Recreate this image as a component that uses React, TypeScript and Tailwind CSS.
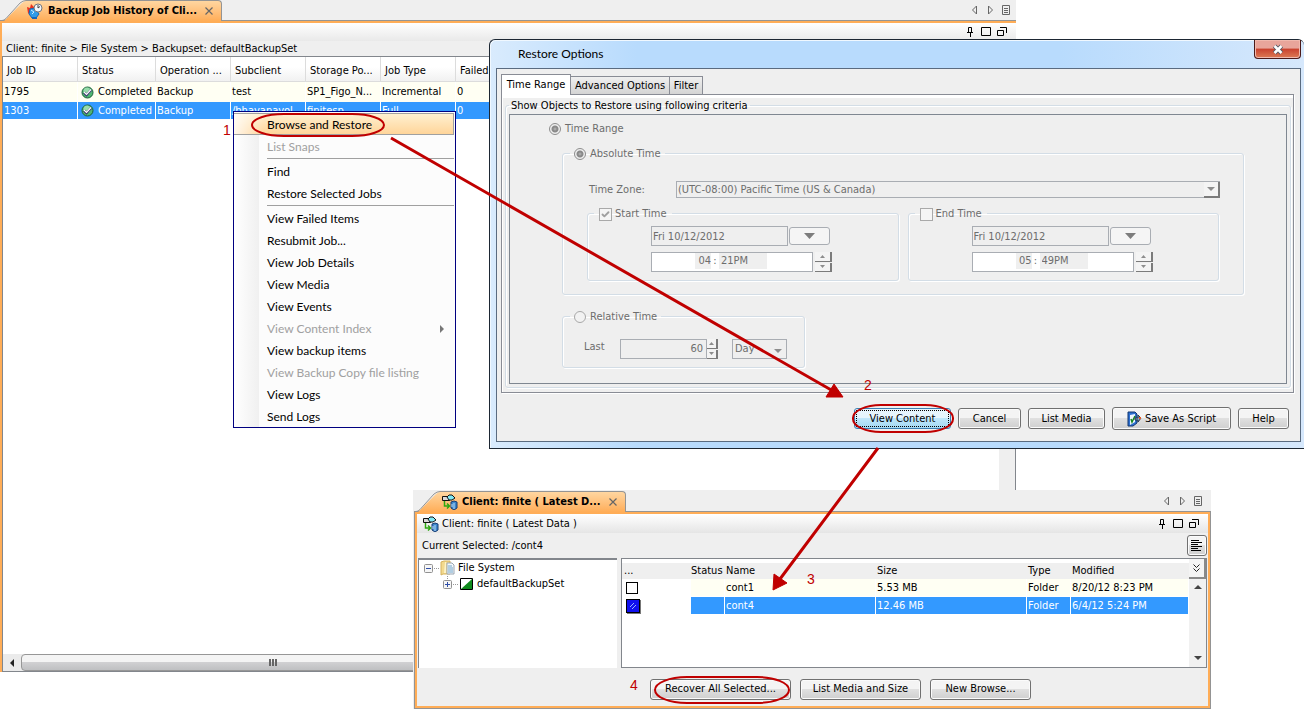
import clsx from "clsx";
import { Check } from "lucide-react";
import type { ReactNode } from "react";

const MENU: { label: string; disabled?: boolean; sub?: boolean; sep?: boolean }[] = [
	{ label: "Browse and Restore" },
	{ label: "List Snaps", disabled: true, sep: true },
	{ label: "Find" },
	{ label: "Restore Selected Jobs", sep: true },
	{ label: "View Failed Items" },
	{ label: "Resubmit Job..." },
	{ label: "View Job Details" },
	{ label: "View Media" },
	{ label: "View Events" },
	{ label: "View Content Index", disabled: true, sub: true },
	{ label: "View backup items" },
	{ label: "View Backup Copy file listing", disabled: true },
	{ label: "View Logs" },
	{ label: "Send Logs" },
];

const JOB_COLUMNS = [
	"Job ID",
	"Status",
	"Operation ...",
	"Subclient",
	"Storage Po...",
	"Job Type",
	"Failed",
];

const JOBS = [
	["1795", "Completed", "Backup", "test", "SP1_Figo_N...", "Incremental", "0"],
	["1303", "Completed", "Backup", "/bhavanavol", "finitesp", "Full", "0"],
];

const FILES = [
	{ name: "cont1", size: "5.53 MB", type: "Folder", modified: "8/20/12 8:23 PM" },
	{ name: "cont4", size: "12.46 MB", type: "Folder", modified: "6/4/12 5:24 PM" },
];

const iconButton = "flex h-3 w-3 items-center justify-center";

function HistoryIcon() {
	return (
		<svg width="18" height="16" viewBox="0 0 18 16" aria-hidden="true">
			<path d="M1 4l3 1 1-4 3 3 1 5-4 4-3-3z" fill="#e8321f" />
			<path d="M4 6l5-1 4 6-3 4H6L3 11z" fill="#2f9be8" stroke="#1566b8" />
			<path d="M6 14h5v2H6z" fill="#1566b8" />
			<circle cx="12" cy="5" r="4" fill="#f2f6fb" stroke="#74767c" />
			<path d="M12 5V2M12 5l2-1.500" stroke="#444" fill="none" />
			<path d="M5 7l3 2-2 2" stroke="#c9ecff" fill="none" />
		</svg>
	);
}

function BrowseIcon() {
	return (
		<svg width="16" height="16" viewBox="0 0 16 16" aria-hidden="true">
			<path d="M.5 2.500h7v4h-7z" fill="#d9d9d9" stroke="#111" />
			<path d="M5 3l2-2h3l3 3-3 2H7z" fill="#7fe9f5" stroke="#111" />
			<path d="M2.500 7v5H7M5 9.500L7.500 12 5 14.500" stroke="#2da810" strokeWidth="1.500" fill="none" />
			<path d="M9 8l3-1 3 1v6l-3 2-3-2z" fill="#3d86cc" stroke="#173d73" />
			<path d="M12 9v6M10 10v3" stroke="#b9dcf7" />
		</svg>
	);
}

function ScriptIcon() {
	return (
		<svg width="15" height="16" viewBox="0 0 15 16" aria-hidden="true">
			<path d="M1 1h7l2 2v9l-4 3H1z" fill="#2d6fd0" stroke="#12366f" />
			<path d="M3 4l5-1v8l-5 3z" fill="#eef6ff" />
			<path d="M4 8l1 3 3-6" stroke="#17851f" strokeWidth="1.500" fill="none" />
			<path d="M8 7h3V4l3 3-3 4V9H8z" fill="#8ba6c6" stroke="#26384f" />
			<path d="M12 7h2" stroke="#e25a28" strokeWidth="2" />
		</svg>
	);
}

function CompletedIcon() {
	return (
		<svg width="13" height="13" viewBox="0 0 13 13" className="shrink-0" aria-hidden="true">
			<circle cx="6.500" cy="6.500" r="5.500" fill="#4fb673" stroke="#1c5f3a" />
			<circle cx="6" cy="5" r="3.500" fill="#97dcaa" />
			<path d="M3 6.500l2.500 2.500L10 4" stroke="#3b3470" strokeWidth="2.500" fill="none" />
			<path d="M3 6l2.500 2.500L10 3.500" stroke="#fff" strokeWidth="1.200" fill="none" />
		</svg>
	);
}

function FolderIcon() {
	return (
		<svg width="16" height="16" viewBox="0 0 16 16" aria-hidden="true">
			<path d="M1 2l3-1h6v13H3l-2 1z" fill="#f2d98e" stroke="#d5b25c" />
			<path d="M5 2h1v11H4z" fill="#fdf3c8" />
			<path d="M7 3h5l2 2v9H7z" fill="#f4f8fc" stroke="#9aa5b1" />
			<path d="M8 6h4M8 8h5M8 10h5M8 12h5" stroke="#6fa3c8" />
		</svg>
	);
}

function Arrow({ dir, className }: { dir: "up" | "down" | "left" | "right"; className?: string }) {
	const points = {
		up: "0,5 4,1 8,5",
		down: "0,2 4,6 8,2",
		left: "6,0 2,4 6,8",
		right: "2,0 6,4 2,8",
	}[dir];
	return (
		<svg width="8" height="8" viewBox="0 0 8 8" className={className} aria-hidden="true">
			<polygon points={points} fill="currentColor" />
		</svg>
	);
}

function StripControls() {
	return (
		<div className="flex items-center gap-1 text-[#666]">
			<button type="button" aria-label="Previous tab" className={iconButton}>
				<svg width="7" height="10" viewBox="0 0 7 10">
					<path d="M5.500 1v8L1.500 5z" fill="none" stroke="currentColor" />
				</svg>
			</button>
			<button type="button" aria-label="Next tab" className={iconButton}>
				<svg width="7" height="10" viewBox="0 0 7 10">
					<path d="M1.500 1v8l4-4z" fill="none" stroke="currentColor" />
				</svg>
			</button>
			<button type="button" aria-label="List tabs" className={iconButton}>
				<svg width="8" height="10" viewBox="0 0 8 10">
					<path d="M.5.5h7v9h-7zM2 3.500h4M2 5.500h4M2 7.500h4" fill="none" stroke="currentColor" />
				</svg>
			</button>
		</div>
	);
}

function WindowControls() {
	return (
		<div className="flex items-center gap-1">
			<button type="button" aria-label="Pin" className={iconButton}>
				<svg width="8" height="10" viewBox="0 0 8 10">
					<path d="M2.500 5V.5h3V5M1 5.500h6M4.500 6v4" fill="none" stroke="#000" />
				</svg>
			</button>
			<button type="button" aria-label="Maximize" className={iconButton}>
				<svg width="10" height="10" viewBox="0 0 10 10">
					<path d="M.5.5h9v8h-9z" fill="none" stroke="#000" />
				</svg>
			</button>
			<button type="button" aria-label="Float" className={iconButton}>
				<svg width="10" height="10" viewBox="0 0 10 10">
					<path d="M.5 3.500h6v5h-6zM3 .5h6.500V6" fill="none" stroke="#000" />
				</svg>
			</button>
		</div>
	);
}

function WindowTab({ icon, title }: { icon: ReactNode; title: string }) {
	return (
		<div className="flex self-stretch">
			<svg width="26" height="21" viewBox="0 0 26 21" aria-hidden="true">
				<defs>
					<linearGradient id="tabFill" x1="0" y1="0" x2="0" y2="1">
						<stop offset="0" stopColor="#ffd6a0" />
						<stop offset="1" stopColor="#ffad57" />
					</linearGradient>
				</defs>
				<path d="M0 21h4L22 3q2-2 4-2v20z" fill="url(#tabFill)" />
				<path d="M0 20.500h2q2 0 4-2L20 3Q23 .5 26 .5" fill="none" stroke="#949494" />
			</svg>
			<div className="flex items-center rounded-tr-sm border-t border-r border-[#949494] bg-gradient-to-b from-[#ffd6a0] to-[#ffad57] pr-[6px]">
				<span className="flex w-[18px] justify-end">{icon}</span>
				<span className="ml-1 font-bold whitespace-nowrap">{title}</span>
				<button type="button" aria-label="Close tab" className="ml-[6px] flex h-3 w-3 items-center justify-center">
					<svg width="8" height="8" viewBox="0 0 8 8">
						<path d="M.5.5l7 7M7.500.5l-7 7" stroke="#666" strokeWidth="1.200" />
					</svg>
				</button>
			</div>
		</div>
	);
}

function JobHistory() {
	return (
		<section className="absolute top-0 right-[288px] bottom-[37px] left-0 flex flex-col bg-[#efefef]">
			<div className="flex h-[21px] items-center justify-between border-b border-[#949494] pr-1">
				<div className="-mb-px flex h-[21px]">
					<WindowTab icon={<HistoryIcon />} title="Backup Job History of Cli..." />
				</div>
				<StripControls />
			</div>
			<div className="flex flex-1 flex-col border-t-2 border-l-2 border-[#ffad57]">
				<div className="flex h-[18px] items-center justify-end bg-gradient-to-b from-white to-[#e9e9e9] pr-2">
					<WindowControls />
				</div>
				<div className="flex h-[15px] items-center pl-1">
					Client: finite &gt; File System &gt; Backupset: defaultBackupSet
				</div>
				<div className="flex flex-1 flex-col border border-[#82868c]">
					<div className="flex flex-1 bg-white">
						<div className="flex-1">
							<table className="w-full table-fixed border-separate border-spacing-0">
								<colgroup>
									<col className="w-[75px]" />
									<col className="w-[78px]" />
									<col className="w-[75px]" />
									<col className="w-[75px]" />
									<col className="w-[75px]" />
									<col className="w-[75px]" />
									<col />
								</colgroup>
								<thead>
									<tr className="h-[25px] bg-gradient-to-b from-white from-40% to-[#f0f0f0]">
										{JOB_COLUMNS.map((c) => (
											<th
												key={c}
												className="border-r border-b border-[#dcdcdc] p-0 pt-[3px] pl-1 text-left font-normal whitespace-nowrap"
											>
												{c}
											</th>
										))}
									</tr>
								</thead>
								<tbody>
									{JOBS.map((job, row) => (
										<tr
											key={job[0]}
											className={row === 1 ? "h-[17px] bg-[#3399ff] text-white" : "h-[20px] bg-[#fffff3]"}
										>
											{job.map((cell, i) => (
												<td
													key={JOB_COLUMNS[i]}
													className="border-r border-white p-0 pl-px leading-4 whitespace-nowrap"
												>
													{i === 1 ? (
														<span className="flex items-center gap-1 pl-[2px]">
															<CompletedIcon />
															{cell}
														</span>
													) : (
														cell
													)}
												</td>
											))}
										</tr>
									))}
								</tbody>
							</table>
						</div>
						<div className="w-[16px] bg-[#efefef]" />
					</div>
					<div className="flex h-[17px] items-stretch bg-[#ebebeb]">
						<button type="button" aria-label="Scroll left" className="flex w-[18px] items-center justify-center text-[#222]">
							<Arrow dir="left" />
						</button>
						<div className="flex w-[504px] items-center justify-center gap-px rounded-sm border border-[#979797] bg-gradient-to-b from-[#f4f4f4] from-45% via-[#d0d0d2] via-50% to-[#bfc0c2]">
							<span className="h-[7px] w-[2px] bg-[#666]" />
							<span className="h-[7px] w-[2px] bg-[#666]" />
							<span className="h-[7px] w-[2px] bg-[#666]" />
						</div>
					</div>
				</div>
			</div>
		</section>
	);
}

function ContextMenu() {
	return (
		<div
			role="menu"
			className="absolute top-[111px] left-[233px] w-[223px] border border-[#000080] bg-[#fcfcfc] bg-[linear-gradient(to_right,white,#f0f0f0_25px,#fcfcfc_25px)] pt-px pr-px font-[Lato,'Open_Sans',sans-serif] text-xs"
		>
			{MENU.map((item, i) => (
				<div key={item.label}>
					<button
						type="button"
						role="menuitem"
						disabled={item.disabled}
						className={clsx(
							"flex h-[22px] w-full items-center justify-between pt-px pr-2 pl-[33px] text-left whitespace-nowrap",
							i === 0 &&
								"border border-l-0 border-[#a0a0a0] bg-[linear-gradient(to_right,#ffffffcc,transparent_30px),linear-gradient(#fff0d0,#ffd59a)]",
							item.disabled && "text-[#a0a0a0]",
						)}
					>
						{item.label}
						{item.sub && <Arrow dir="right" className="text-[#777]" />}
					</button>
					{item.sep && <hr className="mt-px mb-px ml-[33px] border-[#a0a0a0]" />}
				</div>
			))}
		</div>
	);
}

const groupBox = "min-w-0 rounded-[3px] border border-[#d3dde6] shadow-[inset_1px_1px_0_#fff,1px_1px_0_#fff]";
const field = "border border-[#a9adb3] px-px text-[#6d6d6d]";
const radio =
	"h-3 w-3 shrink-0 appearance-none rounded-full border border-[#a8a8a8] bg-[#f2f2f2] checked:border-[#8d8d8d] checked:bg-[radial-gradient(circle,#bbb_0,#8a8a8a_2px,#8a8a8a_3px,#efefef_4px)]";
const pushButton =
	"flex h-[21px] items-center justify-center rounded-[3px] border border-[#707070] bg-gradient-to-b from-[#f4f4f4] from-45% via-[#e0e0e0] via-50% to-[#cfcfcf] whitespace-nowrap shadow-[inset_0_0_0_1px_#fbfbfb]";

function Spinner({ label, className }: { label: string; className: string }) {
	const half =
		"flex flex-1 items-center justify-center border-r-2 border-b border-[#7b7b7b] bg-[#f4f4f4] text-[#8d8d8d]";
	return (
		<div className={clsx("flex flex-col gap-px", className)}>
			<button type="button" disabled aria-label={`Increase ${label}`} className={half}>
				<svg width="5" height="3" viewBox="0 0 5 3">
					<polygon points="0,3 2.500,0 5,3" fill="currentColor" />
				</svg>
			</button>
			<button type="button" disabled aria-label={`Decrease ${label}`} className={half}>
				<svg width="5" height="3" viewBox="0 0 5 3">
					<polygon points="0,0 2.500,3 5,0" fill="currentColor" />
				</svg>
			</button>
		</div>
	);
}

interface TimeGroupProps {
	label: string;
	hour: string;
	minute: string;
	checked?: boolean;
}

function TimeGroup({ label, hour, minute, checked }: TimeGroupProps) {
	return (
		<fieldset className={clsx(groupBox, "flex-1")}>
			<legend className="ml-[6px] h-4 px-[5px]">
				<label className="flex h-[18px] items-center gap-[3px]">
					<span className="relative flex">
						<input
							type="checkbox"
							disabled
							defaultChecked={checked}
							className="h-[13px] w-[13px] appearance-none border border-[#a9a9a9] bg-[#f5f5f5]"
						/>
						{checked && <Check className="absolute top-0.5 left-0.5 h-[9px] w-[9px] text-[#a0a0a0]" strokeWidth={5} />}
					</span>
					{label}
				</label>
			</legend>
			<div className="flex flex-col gap-[6px] pt-[5px] pb-2 pl-[63px]">
				<div className="flex gap-px">
					<input
						type="text"
						disabled
						defaultValue="Fri 10/12/2012"
						aria-label={`${label} date`}
						className={clsx(field, "h-5 w-[137px]")}
					/>
					<button
						type="button"
						disabled
						aria-label={`Pick ${label} date`}
						className="my-px flex w-[41px] items-center justify-center rounded-[3px] border border-[#a9adb3] bg-[#f5f5f5] text-[#7d7d7d]"
					>
						<svg width="11" height="6" viewBox="0 0 11 6">
							<polygon points="0,0 11,0 5.500,6" fill="currentColor" />
						</svg>
					</button>
				</div>
				<div className="flex gap-[2px]">
					<div className={clsx(field, "flex h-5 w-[162px] items-start bg-white pl-[43px]")}>
						<input
							type="text"
							disabled
							defaultValue={hour}
							aria-label={`${label} hour`}
							className="h-4 w-4 bg-[#efefef] text-right"
						/>
						<span className="w-[8px] text-center leading-4">:</span>
						<input
							type="text"
							disabled
							defaultValue={`${minute}PM`}
							aria-label={`${label} minute`}
							className="h-4 w-[48px] bg-[#efefef] pl-[2px]"
						/>
					</div>
					<Spinner label={label} className="w-[17px]" />
				</div>
			</div>
		</fieldset>
	);
}

function RestoreOptions() {
	return (
		<section
			role="dialog"
			aria-labelledby="restore-title"
			className="absolute top-[39px] right-0 left-[489px] rounded-t-md border border-r-0 border-[#1d2733] bg-[#b8dbfd] bg-[linear-gradient(to_right,#d9ebfd_0,#b8dbfd_18%,#b8dbfd_70%,#d6e8fc_100%)] pr-[3px] pb-[6px] pl-[6px] shadow-[inset_1px_1px_0_#f0f8ff]"
		>
			<header className="flex h-[28px] items-start justify-between">
				<h1
					id="restore-title"
					className="mt-[5px] ml-[22px] font-[Lato,'Open_Sans',sans-serif] text-xs leading-[18px]"
				>
					Restore Options
				</h1>
				<button
					type="button"
					aria-label="Close"
					className="flex h-[19px] w-[47px] items-center justify-center rounded-b-[4px] border border-t-0 border-[#4b1a1a] bg-gradient-to-b from-[#e8a59b] from-45% via-[#c9412f] via-50% to-[#dc7a55] shadow-[inset_0_0_0_1px_#f0b9ae]"
				>
					<svg width="12" height="11" viewBox="0 0 12 11">
						<path d="M2.500 2l7 7M9.500 2l-7 7" stroke="#555a66" strokeWidth="4.500" />
						<path d="M2.500 2l7 7M9.500 2l-7 7" stroke="#fff" strokeWidth="2.500" />
					</svg>
				</button>
			</header>
			<div className="border border-[#5a6b80] bg-[#efefef] pt-[5px] pb-[11px]">
				<div role="tablist" className="relative -mb-px flex items-end pl-1">
					<button
						type="button"
						role="tab"
						aria-selected="true"
						className="flex h-[21px] w-[70px] items-center justify-center border border-b-0 border-[#898c95] bg-white"
					>
						Time Range
					</button>
					<button
						type="button"
						role="tab"
						aria-selected="false"
						className="flex h-[19px] w-[99px] items-center justify-center border border-l-0 border-[#898c95] bg-gradient-to-b from-[#f0f0f0] to-[#d4d4d4]"
					>
						Advanced Options
					</button>
					<button
						type="button"
						role="tab"
						aria-selected="false"
						className="flex h-[19px] w-[33px] items-center justify-center border border-l-0 border-[#898c95] bg-gradient-to-b from-[#f0f0f0] to-[#d4d4d4]"
					>
						Filter
					</button>
				</div>
				<div
					role="tabpanel"
					className="mr-[6px] ml-1 border border-[#898c95] pt-[2px] pr-[2px] pb-1 pl-[3px] shadow-[inset_0_3px_0_#fff,inset_1px_0_0_#fff,1px_1px_0_#fff]"
				>
					<fieldset className={clsx(groupBox, "pr-[3px] pb-[3px] pl-[3px]")}>
						<legend className="h-4 px-[2px] leading-[18px]">Show Objects to Restore using following criteria</legend>
						<div className="mt-px border border-[#7f8791] bg-[#efefef] pt-[6px] pb-[15px] text-[#6d6d6d]">
							<label className="ml-[39px] flex h-4 items-center gap-1">
								<input type="radio" name="mode" disabled defaultChecked className={radio} />
								Time Range
							</label>
							<fieldset className={clsx(groupBox, "mt-2 mr-[42px] ml-[52px] pb-[13px]")}>
								<legend className="ml-[7px] h-4 px-1">
									<label className="flex h-[18px] items-center gap-1">
										<input type="radio" name="range" disabled defaultChecked className={radio} />
										Absolute Time
									</label>
								</legend>
								<div className="mt-5 mr-[23px] ml-[26px] flex h-[17px] items-center">
									<label htmlFor="tz" className="w-[87px]">
										Time Zone:
									</label>
									<div className="relative flex-1">
										<select id="tz" disabled className={clsx(field, "block h-[17px] w-full appearance-none opacity-100")}>
											<option>(UTC-08:00) Pacific Time (US &amp; Canada)</option>
										</select>
										<span className="pointer-events-none absolute top-px right-0 flex h-[16px] w-[16px] items-center justify-center border-r-2 border-b-2 border-[#7b7b7b] bg-[#f4f4f4] text-[#8d8d8d]">
											<Arrow dir="down" />
										</span>
									</div>
								</div>
								<div className="mt-[7px] mr-[24px] ml-[24px] flex gap-[9px]">
									<TimeGroup label="Start Time" hour="04" minute="21" checked />
									<TimeGroup label="End Time" hour="05" minute="49" />
								</div>
							</fieldset>
							<fieldset className={clsx(groupBox, "mt-[13px] ml-[52px] w-[243px]")}>
								<legend className="ml-[7px] h-4 px-1">
									<label className="flex h-[18px] items-center gap-1">
										<input type="radio" name="range" disabled className={radio} />
										Relative Time
									</label>
								</legend>
								<div className="mt-[15px] mb-2 ml-[21px] flex h-5">
									<label htmlFor="last" className="w-[36px] leading-4">
										Last
									</label>
									<input
										id="last"
										type="text"
										disabled
										defaultValue="60"
										className={clsx(field, "w-[87px] pr-[3px] text-right")}
									/>
									<Spinner label="last" className="w-[11px]" />
									<div className="relative ml-[14px] w-[55px]">
										<select
											aria-label="Unit"
											disabled
											className={clsx(field, "h-5 w-full appearance-none pl-[2px] opacity-100")}
										>
											<option>Day</option>
										</select>
										<Arrow dir="down" className="pointer-events-none absolute top-2 right-[5px] text-[#8d8d8d]" />
									</div>
								</div>
							</fieldset>
						</div>
					</fieldset>
				</div>
				<div className="mt-[14px] mr-[11px] flex items-center justify-end gap-[7px]">
					<button
						type="button"
						className="flex h-[21px] w-[97px] items-center justify-center rounded-[3px] border border-[#3c7fb1] bg-gradient-to-b from-[#e6f5fd] from-45% via-[#bfe6fa] via-50% to-[#a3d8f3] p-px"
					>
						<span className="flex h-full w-full items-center justify-center border border-dotted border-black">
							View Content
						</span>
					</button>
					<button type="button" className={clsx(pushButton, "w-[63px]")}>
						Cancel
					</button>
					<button type="button" className={clsx(pushButton, "w-[77px]")}>
						List Media
					</button>
					<button type="button" className={clsx(pushButton, "h-[23px] w-[119px] gap-[3px]")}>
						<ScriptIcon />
						Save As Script
					</button>
					<button type="button" className={clsx(pushButton, "w-[51px]")}>
						Help
					</button>
				</div>
			</div>
		</section>
	);
}

function Expander({ open }: { open: boolean }) {
	return (
		<svg width="16" height="16" viewBox="0 0 16 16" aria-hidden="true">
			{!open && <path d="M4.500 0v4" stroke="#999" strokeDasharray="1 1" />}
			<rect x=".5" y="4.500" width="8" height="8" rx="1" fill="#f6f6f6" stroke="#919191" />
			<path d={open ? "M2 8.500h5" : "M2 8.500h5M4.500 6v5"} stroke="#2f4fa8" />
			<path d="M10 8.500h6" stroke="#999" strokeDasharray="1 1" />
		</svg>
	);
}

function BrowseWindow() {
	return (
		<section className="absolute top-[490px] right-[93px] bottom-0 left-[413px] flex flex-col bg-[#efefef] pl-px">
			<div className="flex h-[22px] items-end justify-between border-b border-[#949494] pr-[7px]">
				<div className="-mb-px flex h-[21px]">
					<WindowTab icon={<BrowseIcon />} title="Client: finite ( Latest D..." />
				</div>
				<div className="pb-1">
					<StripControls />
				</div>
			</div>
			<div className="flex flex-1 flex-col border-r border-b border-l border-[#949494]">
				<div className="flex flex-1 flex-col border-2 border-[#ffad57]">
					<div className="flex h-[19px] items-center justify-between bg-gradient-to-b from-white to-[#e5e5e5] pr-[8px] pl-[6px]">
						<span className="flex items-center gap-[3px]">
							<BrowseIcon />
							Client: finite ( Latest Data )
						</span>
						<WindowControls />
					</div>
					<div className="flex h-[25px] items-center justify-between pr-px pl-[5px]">
						Current Selected: /cont4
						<button type="button" aria-label="Show log" className={clsx(pushButton, "w-[20px]")}>
							<svg width="12" height="12" viewBox="0 0 12 12">
								<path
									d="M0 .5h8M0 2.500h11M0 4.500h7M0 6.500h11M0 8.500h7M0 10.500h10"
									stroke="#000"
								/>
							</svg>
						</button>
					</div>
					<div className="flex h-[110px] gap-[4px] pr-px pl-px">
						<ul className="w-[199px] border-t-2 border-l border-[#82868c] bg-white pl-[5px]">
							<li>
								<div className="flex h-4 items-center">
									<Expander open />
									<FolderIcon />
									<span className="ml-[2px]">File System</span>
								</div>
								<ul className="pl-[19px]">
									<li className="flex h-4 items-center">
										<Expander open={false} />
										<svg width="13" height="12" viewBox="0 0 13 12" className="ml-px" aria-hidden="true">
											<path d="M.5.5h12v11H.5z" fill="#fff" stroke="#000" />
											<path d="M12 1v10H1z" fill="#0f8a1c" />
										</svg>
										<span className="ml-1">defaultBackupSet</span>
									</li>
								</ul>
							</li>
						</ul>
						<div className="flex flex-1 border border-[#82868c] bg-white">
							<div className="flex-1 pt-[4px]">
								<table className="w-full table-fixed border-separate border-spacing-0 text-left">
									<colgroup>
										<col className="w-[69px]" />
										<col className="w-[34px]" />
										<col className="w-[151px]" />
										<col className="w-[151px]" />
										<col className="w-[44px]" />
										<col />
									</colgroup>
									<thead>
										<tr className="h-4 bg-[#efefef] leading-4">
											<th className="p-0 pl-[2px] font-normal">...</th>
											<th className="p-0 font-normal">Status</th>
											<th className="p-0 pl-px font-normal">Name</th>
											<th className="p-0 pl-px font-normal">Size</th>
											<th className="p-0 pl-px font-normal">Type</th>
											<th className="p-0 pl-px font-normal">Modified</th>
										</tr>
									</thead>
									<tbody>
										{FILES.map((f, i) => {
											const selected = i === 1;
											const cell = clsx(
												"border-r border-b border-white p-0 pl-px",
												selected ? "bg-[#3399ff] text-white" : "bg-[#fffff3]",
											);
											return (
												<tr key={f.name} className="h-[18px] leading-4">
													<td className="p-0 pl-1">
														<input
															type="checkbox"
															aria-label={f.name}
															defaultChecked={selected}
															className="block h-3 w-3 appearance-none border border-black bg-white checked:h-[14px] checked:w-[14px] checked:bg-[#1010ee] checked:bg-[linear-gradient(135deg,transparent_30%,#9ab4ff_30%,#9ab4ff_40%,transparent_40%,transparent_60%,#9ab4ff_60%,#9ab4ff_70%,transparent_70%)] checked:bg-[length:6px_6px] checked:bg-center checked:bg-no-repeat checked:shadow-[1px_1px_0_#777]"
														/>
													</td>
													<td className={cell} />
													<td className={cell}>{f.name}</td>
													<td className={cell}>{f.size}</td>
													<td className={cell}>{f.type}</td>
													<td className={cell}>{f.modified}</td>
												</tr>
											);
										})}
									</tbody>
								</table>
							</div>
							<div className="flex w-[17px] flex-col bg-[#f1f1f1]">
								<button
									type="button"
									aria-label="Choose columns"
									className="flex h-[20px] items-center justify-center border-r-2 border-b-2 border-[#8a8a8a] bg-[#f4f4f4]"
								>
									<svg width="7" height="8" viewBox="0 0 7 8">
										<path d="M.5.5l3 3 3-3M.5 4.500l3 3 3-3" fill="none" stroke="#222" />
									</svg>
								</button>
								<button type="button" aria-label="Scroll up" className="flex h-[18px] items-center justify-center text-[#444]">
									<Arrow dir="up" />
								</button>
								<div className="flex-1" />
								<button type="button" aria-label="Scroll down" className="flex h-[18px] items-center justify-center text-[#444]">
									<Arrow dir="down" />
								</button>
							</div>
						</div>
					</div>
					<div className="flex flex-1 items-center gap-[9px] pt-1 pl-[233px]">
						<button type="button" className={clsx(pushButton, "w-[141px]")}>
							Recover All Selected...
						</button>
						<button type="button" className={clsx(pushButton, "w-[121px]")}>
							List Media and Size
						</button>
						<button type="button" className={clsx(pushButton, "w-[101px]")}>
							New Browse...
						</button>
					</div>
				</div>
			</div>
		</section>
	);
}

const STEPS = [
	{ n: 1, place: "top-[122px] left-[223px]" },
	{ n: 2, place: "top-[377px] left-[864px]" },
	{ n: 3, place: "top-[571px] left-[807px]" },
	{ n: 4, place: "top-[677px] left-[630px]" },
];

function Annotations() {
	return (
		<div className="pointer-events-none absolute top-0 left-0">
			<svg width="1304" height="709" viewBox="0 0 1304 709" fill="none" stroke="#c00000" aria-hidden="true">
				<rect x="252" y="114" width="132" height="22" rx="32" ry="11" strokeWidth="2" />
				<rect x="853" y="405" width="100" height="27" rx="28" ry="13" strokeWidth="2" />
				<rect x="655" y="677" width="134" height="26" rx="32" ry="13" strokeWidth="2" />
				<path d="M391 138l442 253M878 448l-98 131" strokeWidth="3" />
				<path d="M843 397l-9-13-8 13zM773 590l1-16 13 9z" fill="#c00000" strokeWidth="1" />
			</svg>
			{STEPS.map((s) => (
				<span
					key={s.n}
					className={clsx("absolute font-['Liberation_Sans',Arial,sans-serif] text-sm leading-4 text-[#c00000]", s.place)}
				>
					{s.n}
				</span>
			))}
		</div>
	);
}

export default function App() {
	return (
		<main className="relative h-screen min-h-[709px] overflow-hidden bg-white font-['DejaVu_Sans_Condensed',Tahoma,sans-serif] text-[11px] leading-4 text-black">
			<JobHistory />
			<ContextMenu />
			<RestoreOptions />
			<BrowseWindow />
			<Annotations />
		</main>
	);
}
